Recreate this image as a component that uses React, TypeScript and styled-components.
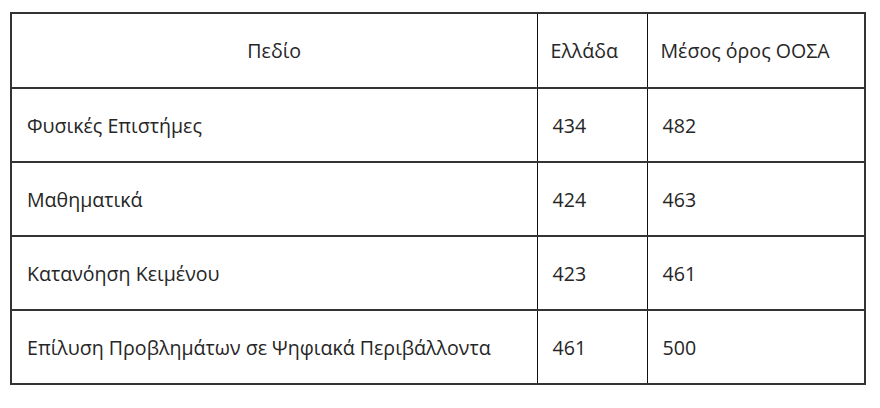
import React from 'react';
import styled, { createGlobalStyle } from 'styled-components';

const GlobalStyle = createGlobalStyle`
  html, body {
    margin: 0;
    padding: 0;
    background: #ffffff;
  }
  body {
    font-family: "Open Sans", "Noto Sans", sans-serif;
    color: #222222;
  }
`;

const Page = styled.div`
  width: 880px;
  height: 408px;
  padding: 12px 0 0 10px;
  box-sizing: border-box;
`;

const Table = styled.table`
  width: 854px;
  border-collapse: collapse;
  border: 2px solid #333333;
  table-layout: fixed;
  font-size: 19.6px;
`;

const Cell = styled.td<{ $align?: 'left' | 'center'; $pad?: number; $h?: number }>`
  height: ${(p) => p.$h ?? 74}px;
  box-sizing: border-box;
  padding: 0 0 0 ${(p) => p.$pad ?? 15}px;
  text-align: ${(p) => p.$align ?? 'left'};
  vertical-align: middle;
  border-bottom: 2px solid #333333;
  border-left: 1px solid #111111;
  color: #262626;
  white-space: nowrap;
`;

const HeadCell = styled(Cell).attrs({ as: 'th' })`
  font-weight: 400;
`;

const rows: [string, number, number][] = [
  ['Φυσικές Επιστήμες', 434, 482],
  ['Μαθηματικά', 424, 463],
  ['Κατανόηση Κειμένου', 423, 461],
  ['Επίλυση Προβλημάτων σε Ψηφιακά Περιβάλλοντα', 461, 500],
];

export default function App() {
  return (
    <>
      <GlobalStyle />
      <Page>
        <Table>
          <colgroup>
            <col style={{ width: 526 }} />
            <col style={{ width: 110 }} />
            <col style={{ width: 218 }} />
          </colgroup>
          <thead>
            <tr>
              <HeadCell $align="center" $pad={0} $h={75}>Πεδίο</HeadCell>
              <HeadCell $pad={13} $h={75}>Ελλάδα</HeadCell>
              <HeadCell $pad={13} $h={75}>Μέσος όρος ΟΟΣΑ</HeadCell>
            </tr>
          </thead>
          <tbody>
            {rows.map(([name, gr, oecd]) => (
              <tr key={name}>
                <Cell>{name}</Cell>
                <Cell>{gr}</Cell>
                <Cell>{oecd}</Cell>
              </tr>
            ))}
          </tbody>
        </Table>
      </Page>
    </>
  );
}
